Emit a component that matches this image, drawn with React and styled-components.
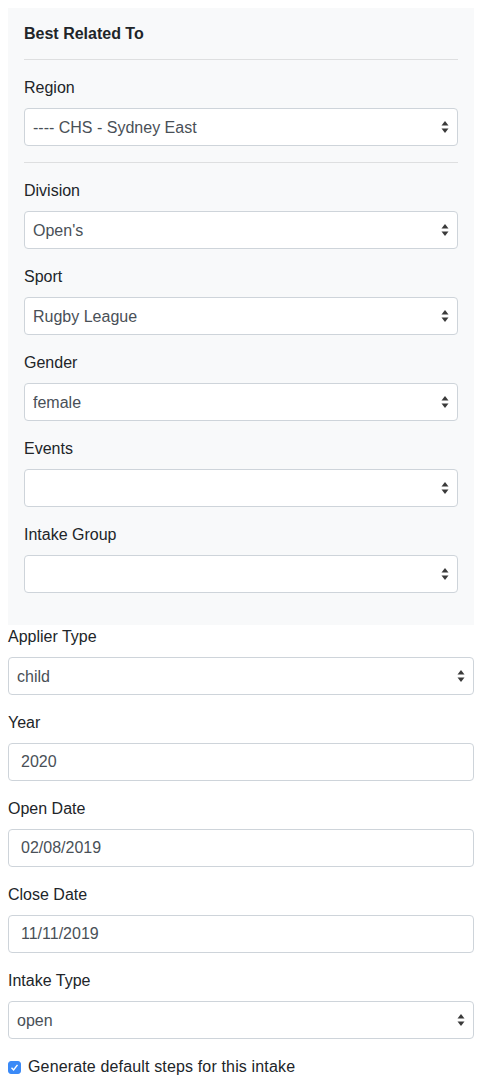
import React, { useState } from "react";
import styled, { createGlobalStyle } from "styled-components";

const GlobalStyle = createGlobalStyle`
  * { box-sizing: border-box; }
  body {
    margin: 0;
    font-family: "Liberation Sans", Arial, sans-serif;
    font-size: 16px;
    line-height: 1.5;
    color: #212529;
    background: #fff;
  }
`;

const Page = styled.div`
  padding: 8px 12px 8px 8px;
  width: 486px;
`;

const Panel = styled.div`
  background: #f8f9fa;
  padding: 16px;
`;

const Title = styled.h6`
  margin: 0;
  font-size: 16px;
  font-weight: 700;
  line-height: 1.2;
`;

const Rule = styled.hr`
  margin: 16px 0;
  border: 0;
  border-top: 1px solid rgba(0, 0, 0, 0.1);
`;

const Group = styled.div`
  margin-bottom: 16px;
`;

const Label = styled.label`
  display: block;
  margin-bottom: 8px;
`;

const SelectWrap = styled.div`
  position: relative;
`;

const Select = styled.select`
  display: block;
  width: 100%;
  height: 38px;
  padding: 7px 28px 5px 8px;
  font: inherit;
  color: #495057;
  background: #fff;
  border: 1px solid #ced4da;
  border-radius: 4px;
  appearance: none;
  -webkit-appearance: none;
  outline: none;
`;

const Arrows = styled.svg`
  position: absolute;
  right: 9px;
  top: 50%;
  transform: translateY(-50%);
  pointer-events: none;
`;

const Input = styled.input`
  display: block;
  width: 100%;
  height: 38px;
  padding: 6px 12px;
  font: inherit;
  color: #495057;
  background: #fff;
  border: 1px solid #ced4da;
  border-radius: 4px;
  outline: none;
`;

const CheckRow = styled.label`
  display: flex;
  align-items: center;
  gap: 7px;
  letter-spacing: 0.15px;
`;

const Box = styled.span`
  width: 13px;
  height: 13px;
  border-radius: 3px;
  background: ${(p) => (p.checked ? "#3b8af7" : "#fff")};
  border: 1px solid ${(p) => (p.checked ? "#3b8af7" : "#aaa")};
  display: flex;
  align-items: center;
  justify-content: center;
`;

const Field = ({ label, value, options }) => (
  <Group>
    <Label>{label}</Label>
    <SelectWrap>
      <Select defaultValue={value}>
        {options.map((o) => (
          <option key={o} value={o}>
            {o}
          </option>
        ))}
      </Select>
      <Arrows width="8" height="13" viewBox="0 0 8 13">
        <path d="M4 0.5 L7.5 5 L0.5 5 Z" fill="#3a3a3a" />
        <path d="M4 12.5 L7.5 8 L0.5 8 Z" fill="#3a3a3a" />
      </Arrows>
    </SelectWrap>
  </Group>
);

const TextField = ({ label, value }) => (
  <Group>
    <Label>{label}</Label>
    <Input defaultValue={value} />
  </Group>
);

export default function App() {
  const [checked, setChecked] = useState(true);

  return (
    <Page>
      <GlobalStyle />
      <Panel>
        <Title>Best Related To</Title>
        <Rule />
        <Field label="Region" value="---- CHS - Sydney East" options={["---- CHS - Sydney East"]} />
        <Rule />
        <Field label="Division" value="Open's" options={["Open's"]} />
        <Field label="Sport" value="Rugby League" options={["Rugby League"]} />
        <Field label="Gender" value="female" options={["female", "male"]} />
        <Field label="Events" value="" options={[""]} />
        <Field label="Intake Group" value="" options={[""]} />
      </Panel>
      <Field label="Applier Type" value="child" options={["child", "parent"]} />
      <TextField label="Year" value="2020" />
      <TextField label="Open Date" value="02/08/2019" />
      <TextField label="Close Date" value="11/11/2019" />
      <Field label="Intake Type" value="open" options={["open", "closed"]} />
      <CheckRow onClick={() => setChecked(!checked)}>
        <Box checked={checked}>
          {checked && (
            <svg width="9" height="9" viewBox="0 0 9 9">
              <path d="M1.5 4.8 L3.6 7 L7.5 1.8" stroke="#fff" strokeWidth="1.4" fill="none" />
            </svg>
          )}
        </Box>
        Generate default steps for this intake
      </CheckRow>
    </Page>
  );
}
